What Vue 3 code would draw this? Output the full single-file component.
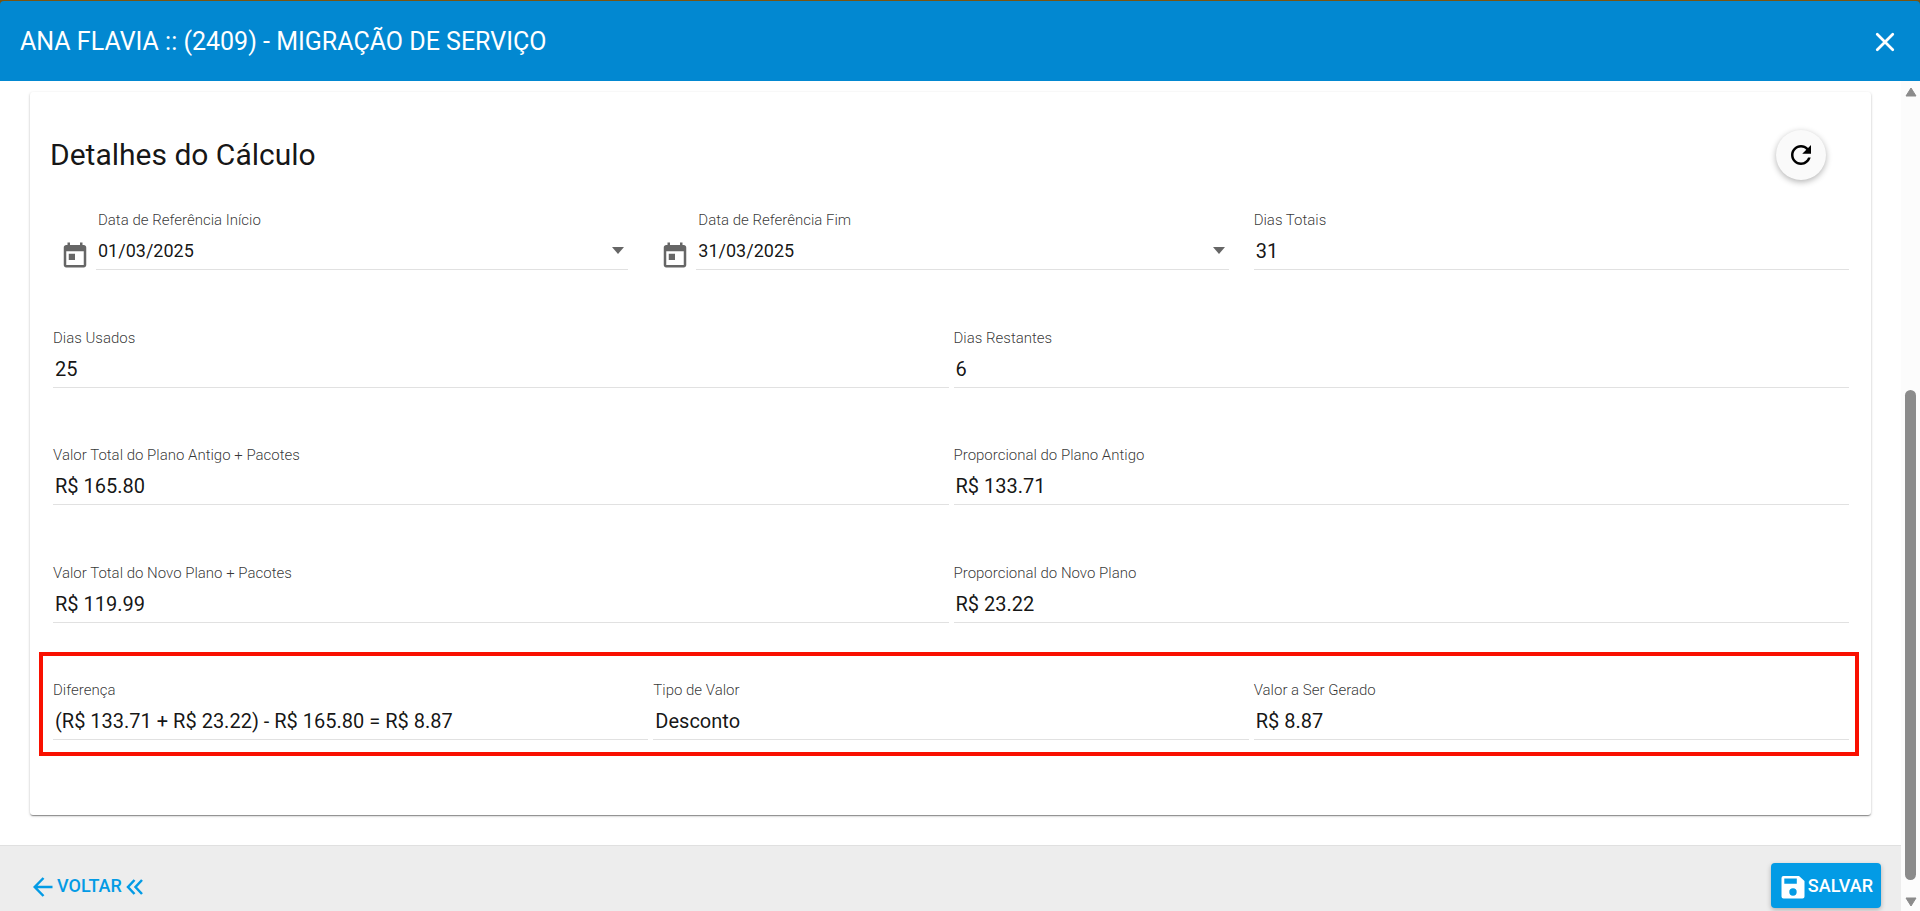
<script setup>
import { ref } from 'vue'

const start = ref('01/03/2025')
const end = ref('31/03/2025')

const rows = ref([
  [
    { id: 'inicio', label: 'Data de Referência Início', value: start, date: true },
    { id: 'fim', label: 'Data de Referência Fim', value: end, date: true },
    { id: 'totais', label: 'Dias Totais', value: '31' },
  ],
  [
    { id: 'usados', label: 'Dias Usados', value: '25' },
    { id: 'restantes', label: 'Dias Restantes', value: '6' },
  ],
  [
    { id: 'antigo', label: 'Valor Total do Plano Antigo + Pacotes', value: 'R$ 165.80' },
    { id: 'prop-antigo', label: 'Proporcional do Plano Antigo', value: 'R$ 133.71' },
  ],
  [
    { id: 'novo', label: 'Valor Total do Novo Plano + Pacotes', value: 'R$ 119.99' },
    { id: 'prop-novo', label: 'Proporcional do Novo Plano', value: 'R$ 23.22' },
  ],
  [
    { id: 'diferenca', label: 'Diferença', value: '(R$ 133.71 + R$ 23.22) - R$ 165.80 = R$ 8.87' },
    { id: 'tipo', label: 'Tipo de Valor', value: 'Desconto' },
    { id: 'gerado', label: 'Valor a Ser Gerado', value: 'R$ 8.87' },
  ],
])
</script>

<template>
  <div class="dialog">
    <header class="toolbar">
      <h1>ANA FLAVIA :: (2409) - MIGRAÇÃO DE SERVIÇO</h1>
      <button class="close" type="button" aria-label="Fechar">
        <svg viewBox="0 0 24 24" width="30" height="30">
          <path d="M5.8 5.8 18.2 18.2M18.2 5.8 5.8 18.2" fill="none" stroke="#fff" stroke-width="2.2" stroke-linecap="round" />
        </svg>
      </button>
    </header>

    <div class="body">
      <div class="content">
        <main>
          <section class="card">
            <div class="card-head">
              <h2>Detalhes do Cálculo</h2>
              <button class="fab" type="button" aria-label="Recalcular">
                <svg viewBox="0 0 24 24" width="30" height="30">
                  <path d="M17.65 6.35C16.2 4.9 14.21 4 12 4c-4.42 0-7.99 3.58-7.99 8s3.57 8 7.99 8c3.73 0 6.84-2.55 7.73-6h-2.08c-.82 2.33-3.04 4-5.65 4-3.31 0-6-2.69-6-6s2.69-6 6-6c1.66 0 3.14.69 4.22 1.78L13 11h7V4l-2.35 2.35z" />
                </svg>
              </button>
            </div>

            <form class="rows">
              <div
                v-for="(row, i) in rows"
                :key="i"
                class="row"
                :class="{ half: row.length === 2, marked: i === rows.length - 1 }"
              >
                <div v-for="f in row" :key="f.id" class="field" :class="{ date: f.date }">
                  <label :for="f.id">{{ f.label }}</label>
                  <div class="control">
                    <input :id="f.id" v-model="f.value" type="text" />
                    <button v-if="f.date" class="caret" type="button" aria-label="Abrir calendário"></button>
                  </div>
                  <svg v-if="f.date" class="calendar" viewBox="0 0 24 24" width="30" height="30">
                    <path d="M7 11h5v5H7z" />
                    <path fill-rule="evenodd" d="M19 4h-1V2h-2v2H8V2H6v2H5c-1.11 0-1.99.9-1.99 2L3 20c0 1.1.89 2 2 2h14c1.1 0 2-.9 2-2V6c0-1.1-.9-2-2-2zm0 16H5V9h14v11z" />
                  </svg>
                </div>
              </div>
            </form>
          </section>
        </main>

        <footer>
          <button class="back" type="button">
            <svg class="arrow" viewBox="0 0 20 20" width="20" height="20">
              <path d="M19.5 10H2M10.5 1 1.7 10l8.8 9" />
            </svg>
            <span>VOLTAR</span>
            <svg class="chevrons" viewBox="0 0 18 16" width="18" height="16">
              <path d="M8.5 1 2 8l6.5 7M16 1 9.5 8l6.5 7" />
            </svg>
          </button>
          <button class="save" type="button">
            <svg viewBox="0 0 24 24" width="24" height="24">
              <path fill-rule="evenodd" d="M2.5 1H18l5.5 5v15.5A2 2 0 0 1 21.5 23.5H2.5a2 2 0 0 1-2-2V3a2 2 0 0 1 2-2zM3.3 3.5v5.3h12.5V3.5zM12 13.3a3.7 3.7 0 1 0 0 7.4 3.7 3.7 0 0 0 0-7.4z" />
            </svg>
            <span>SALVAR</span>
          </button>
        </footer>
      </div>

      <div class="scrollbar" aria-hidden="true">
        <svg viewBox="0 0 12 10" width="12" height="10">
          <path d="M6 1 11 9H1z" />
        </svg>
        <div class="track"><div class="thumb"></div></div>
        <svg viewBox="0 0 12 10" width="12" height="10">
          <path d="M6 9 11 1H1z" />
        </svg>
      </div>
    </div>
  </div>
</template>

<style>
body {
  background: #7a5410;
}
</style>

<style scoped>
* {
  box-sizing: border-box;
}
.dialog {
  display: flex;
  flex-direction: column;
  min-height: 100vh;
  padding-top: 1px;
  font-family: Roboto, 'Noto Sans', sans-serif;
  color: rgba(0, 0, 0, 0.92);
}
button {
  border: 0;
  padding: 0;
  background: none;
  font: inherit;
  color: inherit;
  cursor: pointer;
}
svg {
  display: block;
  flex: none;
}
h1,
h2 {
  margin: 0;
  font-weight: 400;
}
.toolbar {
  display: flex;
  align-items: center;
  justify-content: space-between;
  height: 80px;
  padding: 2px 20px 0;
  border-radius: 4px 4px 0 0;
  background: #0288d1;
  color: #fff;
}
h1 {
  font-size: 25px;
  line-height: 30px;
}
.body {
  flex: 1;
  display: flex;
  background: #fff;
}
.content {
  flex: 1;
  min-width: 0;
  display: flex;
  flex-direction: column;
}
main {
  flex: 1;
  display: flex;
  padding: 11px 30px 30px;
}
.card {
  flex: 1;
  display: flex;
  flex-direction: column;
  padding: 38px 0 75px;
  border-radius: 3px;
  background: #fff;
  box-shadow: 0 1px 3px rgba(0, 0, 0, 0.2), 0 1px 1px rgba(0, 0, 0, 0.2), 0 2px 1px -1px rgba(0, 0, 0, 0.2);
}
.card-head {
  display: flex;
  align-items: center;
  justify-content: space-between;
  padding: 0 45px 0 20px;
  margin-bottom: 31px;
}
h2 {
  font-size: 30px;
  line-height: 36px;
}
.fab {
  display: grid;
  place-items: center;
  width: 50px;
  height: 50px;
  border-radius: 50%;
  background: #fafafa;
  color: #000;
  box-shadow: 0 2px 6px rgba(0, 0, 0, 0.3);
}
.fab svg {
  fill: currentColor;
}
.rows {
  flex: 1;
  display: flex;
  flex-direction: column;
  justify-content: space-between;
  gap: 24px;
  padding: 0 22px 0 23px;
}
.row {
  position: relative;
  display: grid;
  grid-template-columns: repeat(3, minmax(0, 1fr));
  gap: 5px;
}
.row.half {
  grid-template-columns: repeat(2, minmax(0, 1fr));
}
.marked::after {
  content: '';
  position: absolute;
  inset: -29px -10px -16px -14px;
  border: 4px solid #f91000;
  pointer-events: none;
}
.field {
  display: grid;
  grid-template-rows: 18px 37px;
  row-gap: 4px;
}
.field.date {
  grid-template-columns: 30px minmax(0, 1fr);
  column-gap: 6px;
  padding: 0 20px 0 7px;
}
label {
  font-size: 15px;
  font-weight: 300;
  line-height: 18px;
  color: rgba(0, 0, 0, 0.8);
}
.date label {
  grid-column: 2;
  padding-left: 2px;
}
.control {
  display: flex;
  align-items: center;
  border-bottom: 1px solid #e1e1e1;
}
.date .control {
  grid-area: 2 / 2;
  padding-bottom: 2px;
}
input {
  flex: 1;
  min-width: 0;
  height: 34px;
  border: 0;
  padding: 0 2px;
  background: none;
  outline: 0;
  font: inherit;
  font-size: 20px;
  color: inherit;
}
.date input {
  font-size: 18px;
}
.caret {
  margin-right: 4px;
  border: solid transparent;
  border-width: 7px 6px 0;
  border-top-color: #666;
}
.calendar {
  grid-area: 2 / 1;
  align-self: end;
  fill: #666;
}
footer {
  display: flex;
  align-items: center;
  justify-content: space-between;
  height: 66px;
  padding: 14px 20px 0 33px;
  border-top: 1px solid #e0e0e0;
  background: #ededed;
  font-size: 18px;
  font-weight: 500;
  line-height: 24px;
}
.back {
  display: flex;
  align-items: center;
  gap: 4px;
  color: #039be5;
}
.back svg {
  margin-top: 2px;
  fill: none;
  stroke: currentColor;
  stroke-width: 2.5;
}
.save {
  display: flex;
  align-items: center;
  gap: 3px;
  height: 45px;
  padding: 0 8px 0 10px;
  border-radius: 4px;
  background: #039be5;
  color: #fff;
  box-shadow: 0 2px 5px rgba(0, 0, 0, 0.26);
}
.save svg {
  margin-top: 2px;
  fill: #fff;
}
.scrollbar {
  display: flex;
  flex-direction: column;
  align-items: center;
  width: 19px;
  padding: 6px 0 4px;
  background: #fcfcfc;
}
.scrollbar svg {
  fill: #8b8b8b;
  stroke: #8b8b8b;
  stroke-width: 1;
  stroke-linejoin: round;
}
.track {
  flex: 1;
  display: flex;
  flex-direction: column;
  justify-content: flex-end;
  width: 11px;
  padding-bottom: 17px;
}
.thumb {
  height: 62.6%;
  border-radius: 6px;
  background: #8b8b8b;
}
</style>
